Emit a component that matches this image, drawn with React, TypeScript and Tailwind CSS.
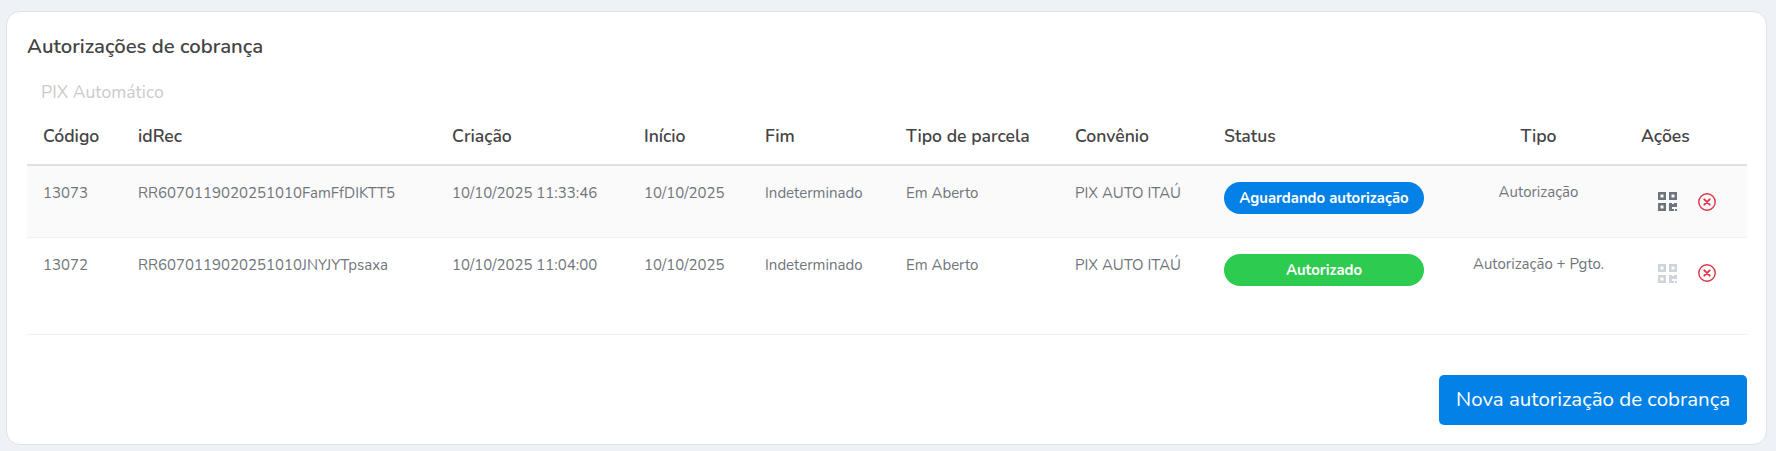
import React from 'react';

const headers = ['Código', 'idRec', 'Criação', 'Início', 'Fim', 'Tipo de parcela', 'Convênio', 'Status', 'Tipo', 'Ações'];

const rows = [
  {
    codigo: '13073',
    idRec: 'RR6070119020251010FamFfDIKTT5',
    criacao: '10/10/2025 11:33:46',
    status: 'Aguardando autorização',
    tipo: 'Autorização',
    active: true,
  },
  {
    codigo: '13072',
    idRec: 'RR6070119020251010JNYJYTpsaxa',
    criacao: '10/10/2025 11:04:00',
    status: 'Autorizado',
    tipo: 'Autorização + Pgto.',
    active: false,
  },
];

const QrIcon = ({ className }: { className: string }) => (
  <svg viewBox="0 0 19 19" width="19" height="19" fill="currentColor" className={className}>
    <path fillRule="evenodd" d="M0 0h8v8H0zM2.5 2.5v3h3v-3zM11 0h8v8h-8zM13.5 2.5v3h3v-3zM0 11h8v8H0zM2.5 13.5v3h3v-3z" />
    <path d="M11 11h3v8h-3zM14 12h2v3h-2zM16 11h3v4h-3zM14 17h2v2h-2zM17 17h2v2h-2z" />
  </svg>
);

const CancelIcon = () => (
  <svg viewBox="0 0 18 18" width="18" height="18" fill="none" stroke="#dc3545" className="block">
    <circle cx="9" cy="9" r="8.2" strokeWidth="1.4" />
    <path d="M6.3 6.3l5.4 5.4M11.7 6.3l-5.4 5.4" strokeWidth="1.9" strokeLinecap="round" />
  </svg>
);

export default function App() {
  return (
    <div className="h-[451px] bg-[#eef1f6] pl-[6px] pr-[9px] pt-[11px] font-['Nunito','Open_Sans',sans-serif]">
      <div className="h-[434px] rounded-[14px] border border-[#dfe2e6] bg-white pl-5 pr-[19px] pt-[20px]">
        <h2 className="text-[20.3px] leading-7 font-semibold text-[#444444]">Autorizações de cobrança</h2>
        <div className="mt-[20px] pl-[14px] text-[17.6px] leading-6 text-[#cbcbcb]">PIX Automático</div>
        <table className="mt-[3px] w-full table-fixed border-collapse">
          <colgroup>
            <col className="w-[95px]" />
            <col className="w-[314px]" />
            <col className="w-[192px]" />
            <col className="w-[121px]" />
            <col className="w-[141px]" />
            <col className="w-[169px]" />
            <col className="w-[149px]" />
            <col className="w-[234px]" />
            <col className="w-[183px]" />
            <col />
          </colgroup>
          <thead>
            <tr className="h-[58px] border-b-2 border-[#dee2e6]">
              {headers.map((h) => (
                <th
                  key={h}
                  className={`pt-[2px] text-[17.6px] font-semibold text-[#444444] ${
                    h === 'Tipo' ? 'pl-[10px] text-center' : 'px-4 text-left'
                  }`}
                >
                  {h}
                </th>
              ))}
            </tr>
          </thead>
          <tbody className="text-[15px] text-[#70757a]">
            {rows.map((r) => (
              <tr
                key={r.codigo}
                className={`border-b border-[#eef0f2] align-top ${r.active ? 'h-[72px] bg-[#fafafa]' : 'h-[97px]'}`}
              >
                <td className="px-4 pt-[17px] leading-5">{r.codigo}</td>
                <td className="px-4 pt-[17px] leading-5 whitespace-nowrap">{r.idRec}</td>
                <td className="px-4 pt-[17px] leading-5 whitespace-nowrap">{r.criacao}</td>
                <td className="px-4 pt-[17px] leading-5">10/10/2025</td>
                <td className="px-4 pt-[17px] leading-5">Indeterminado</td>
                <td className="px-4 pt-[17px] leading-5">Em Aberto</td>
                <td className="px-4 pt-[17px] leading-5 whitespace-nowrap">PIX AUTO ITAÚ</td>
                <td className="px-4 pt-[16px]">
                  <span
                    className={`block h-8 w-[200px] rounded-full text-center text-[14.9px] leading-8 font-bold text-white ${
                      r.active ? 'bg-[#0481e6]' : 'bg-[#2dcb50]'
                    }`}
                  >
                    {r.status}
                  </span>
                </td>
                <td className="pl-[10px] pt-[16px] text-center leading-5 whitespace-nowrap">{r.tipo}</td>
                <td className="px-4 pt-[26px]">
                  <div className="flex items-center gap-[21px] pl-[17px]">
                    <QrIcon className={r.active ? 'text-[#6c757d]' : 'text-[#ced4da]'} />
                    <CancelIcon />
                  </div>
                </td>
              </tr>
            ))}
          </tbody>
        </table>
        <div className="mt-10 flex justify-end">
          <button className="h-[50px] rounded-[5px] bg-[#0481e6] px-[17px] text-[20.5px] text-white">
            Nova autorização de cobrança
          </button>
        </div>
      </div>
    </div>
  );
}
